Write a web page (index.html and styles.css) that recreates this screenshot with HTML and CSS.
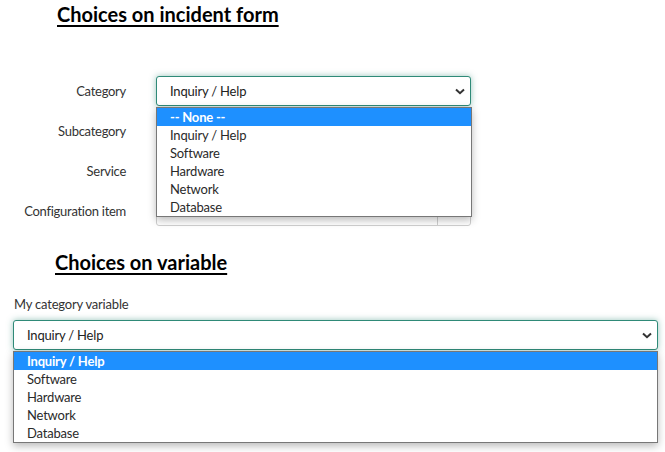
FILE: index.html
```html
<!DOCTYPE html>
<html>
<head>
<meta charset="utf-8">
<link rel="stylesheet" href="styles.css">
</head>
<body>
<div class="page">
  <section class="sec1">
    <h2 class="title t1">Choices on incident form</h2>
    <div class="form">
      <div class="label">Category</div>
      <div class="field">
        <div class="select focus">
          <span>Inquiry / Help</span>
          <svg class="chev" width="10" height="7" viewBox="0 0 10 7"><polyline points="1,1.5 5,5.2 9,1.5" fill="none" stroke="#333" stroke-width="2"/></svg>
        </div>
        <ul class="menu m1">
          <li class="sel">-- None --</li>
          <li>Inquiry / Help</li>
          <li>Software</li>
          <li>Hardware</li>
          <li>Network</li>
          <li>Database</li>
        </ul>
      </div>
      <div class="label">Subcategory</div>
      <div class="field"><div class="select plain"></div></div>
      <div class="label">Service</div>
      <div class="field"><div class="select plain"></div></div>
      <div class="label">Configuration item</div>
      <div class="field"><div class="select plain lookup"><span class="btn"></span></div></div>
    </div>
  </section>
  <section class="sec2">
    <h2 class="title t2">Choices on variable</h2>
    <div class="vlabel">My category variable</div>
    <div class="field wide">
      <div class="select focus">
        <span>Inquiry / Help</span>
        <svg class="chev" width="10" height="7" viewBox="0 0 10 7"><polyline points="1,1.5 5,5.2 9,1.5" fill="none" stroke="#333" stroke-width="2"/></svg>
      </div>
      <ul class="menu m2">
        <li class="sel">Inquiry / Help</li>
        <li>Software</li>
        <li>Hardware</li>
        <li>Network</li>
        <li>Database</li>
      </ul>
    </div>
  </section>
</div>
</body>
</html>
```
FILE: styles.css
```css
* { box-sizing: border-box; }
html, body { margin: 0; padding: 0; background: #fff; }
body { font-family: "Lato", "Open Sans", sans-serif; color: #2e2e2e; width: 665px; height: 452px; overflow: hidden; }
.page { display: flex; flex-direction: column; }
.title {
  margin: 0;
  font-family: "Lato", sans-serif;
  font-weight: 700;
  font-size: 20px;
  line-height: 24px;
  color: #000;
  text-decoration: underline;
  text-decoration-thickness: 2px;
  text-underline-offset: 3px;
}
.t1 { margin: 2px 0 0 57px; }
.form {
  margin-top: 50px;
  display: grid;
  grid-template-columns: 126px 315px;
  grid-auto-rows: 30px;
  column-gap: 30px;
  row-gap: 10px;
}
.label { font-size: 13px; letter-spacing: -0.28px; text-align: right; align-self: center; color: #333; }
.field { position: relative; }
.select {
  height: 30px;
  border-radius: 3px;
  display: flex;
  align-items: center;
  padding-left: 13px;
  font-size: 13px;
  letter-spacing: -0.2px;
  color: #222;
  background: #fff;
}
.select span { flex: 1; }
.focus { border: 1px solid #2f8a78; box-shadow: 0 0 6px rgba(47,138,120,0.5); }
.plain { border: 1px solid #cfcfcf; }
.lookup { justify-content: flex-end; padding: 0; }
.btn { flex: 0 0 33px !important; height: 100%; border-left: 1px solid #cfcfcf; }
.chev { margin-right: 5px; }
.menu {
  position: absolute;
  left: 0;
  top: 31px;
  margin: 0;
  padding: 0;
  list-style: none;
  background: #fff;
  border: 1px solid #777;
  box-shadow: 0 3px 8px rgba(0,0,0,0.28);
  z-index: 2;
  font-size: 13px;
  letter-spacing: -0.2px;
  color: #2a2a2a;
}
.m1 { width: 316px; }
.m2 { width: 645px; }
.menu li { height: 18px; line-height: 18px; padding-left: 13px; }
.menu li.sel { background: #1e90ff; color: #fff; font-weight: 700; }
.sec2 { margin-top: 24px; }
.t2 { margin-left: 55px; }
.vlabel { margin: 22px 0 0 14px; font-size: 13px; letter-spacing: -0.2px; color: #333; line-height: 16px; }
.wide { margin: 8px 0 0 13px; width: 645px; }
```
